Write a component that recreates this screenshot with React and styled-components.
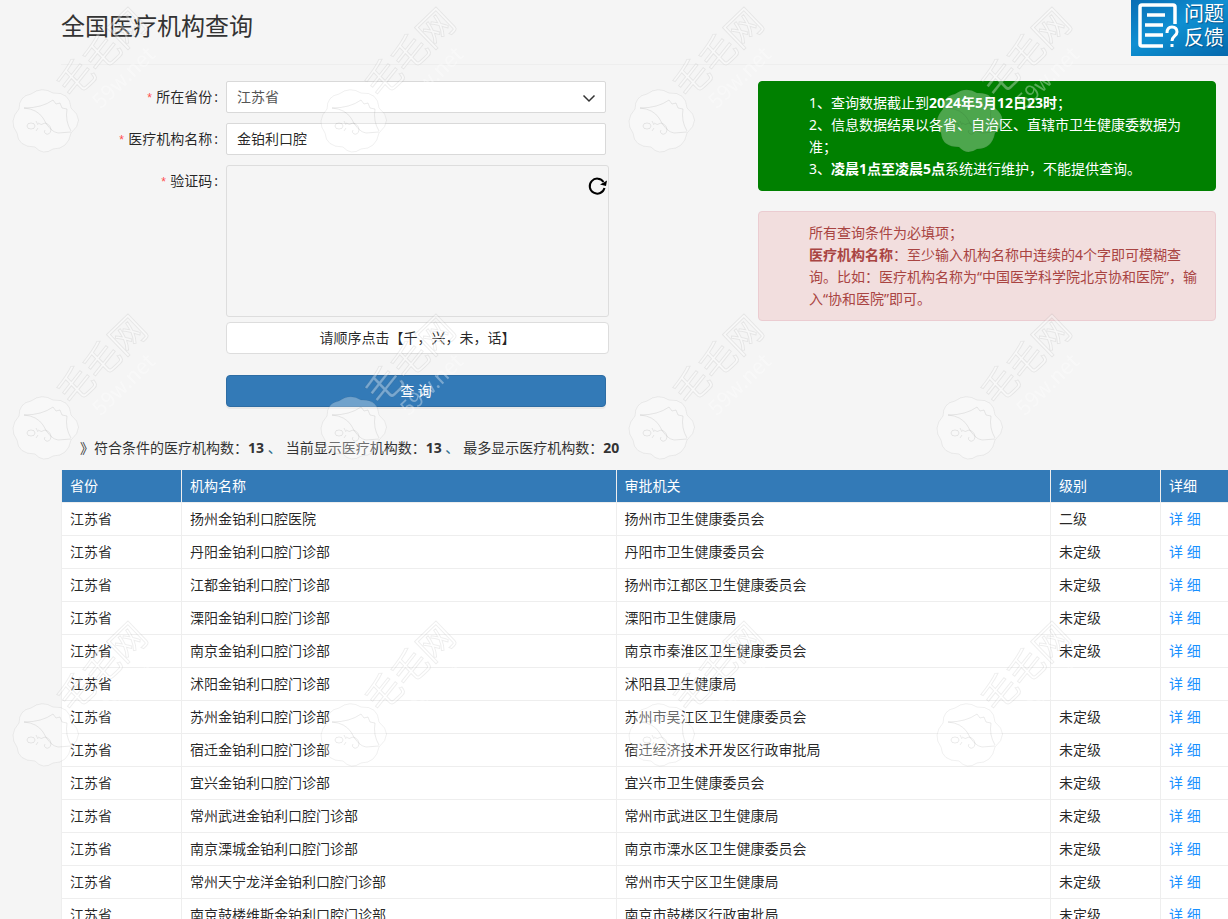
import React, { useState } from 'react';
import styled, { createGlobalStyle } from 'styled-components';

const GlobalStyle = createGlobalStyle`
  * {
    box-sizing: border-box;
  }
  html {
    scrollbar-width: none;
  }
  body {
    margin: 0;
    background: #f5f5f5;
    color: rgba(0, 0, 0, 0.85);
    font-family: "Noto Sans", "Noto Sans CJK SC", sans-serif;
    font-size: 14px;
    line-height: 22px;
  }
  input, select, button {
    font: inherit;
    color: inherit;
  }
`;

const Page = styled.main`
  padding-left: 61px;
`;

const PageHeader = styled.header`
  height: 65px;
  padding-top: 8px;
  border-bottom: 1px solid #eee;
`;

const Title = styled.h1`
  margin: 0;
  color: #333;
  font-size: 24px;
  font-weight: 400;
  line-height: 36px;
`;

const Columns = styled.div`
  display: grid;
  grid-template-columns: 697fr 458fr;
  align-items: start;
  padding: 16px 12px 0 0;
`;

const Form = styled.form`
  display: flex;
  flex-direction: column;
  gap: 10px;
`;

const FormRow = styled.div`
  display: grid;
  grid-template-columns: 165px 380px;
`;

const Label = styled.label`
  padding-right: 8px;
  line-height: 32px;
  text-align: right;

  &::before {
    content: '*';
    margin-right: 3px;
    color: #ff4d4f;
    font-family: "Liberation Mono", monospace;
    font-size: 12px;
    line-height: 1;
  }
  &::after {
    content: ':';
    margin-left: 2px;
  }
`;

const SelectBox = styled.div`
  position: relative;

  svg {
    position: absolute;
    top: 12px;
    right: 10px;
    pointer-events: none;
  }
`;

const Select = styled.select`
  width: 100%;
  height: 32px;
  padding: 0 10px;
  border: 1px solid #d9d9d9;
  border-radius: 2px;
  background: #fff;
  color: #555;
  appearance: none;
`;

const TextInput = styled.input`
  width: 100%;
  height: 32px;
  padding: 0 10px 2px;
  border: 1px solid #d9d9d9;
  border-radius: 2px;
  background: #fff;
`;

const Captcha = styled.div`
  display: flex;
  flex-direction: column;
  gap: 5px;
  width: 383px;
`;

const CaptchaImage = styled.div`
  display: flex;
  justify-content: flex-end;
  align-items: flex-start;
  height: 152px;
  padding: 11px 0;
  border: 1px solid #ddd;
  border-radius: 3px;
`;

const RefreshButton = styled.button`
  display: flex;
  padding: 0;
  border: 0;
  background: none;
  color: #000;
  cursor: pointer;
`;

const CaptchaHint = styled.div`
  height: 32px;
  border: 1px solid #ddd;
  border-radius: 4px;
  background: #fff;
  line-height: 30px;
  text-align: center;
`;

const SubmitButton = styled.button`
  grid-column: 2;
  height: 32px;
  margin-top: 11px;
  border: 1px solid #2e6da4;
  border-radius: 4px;
  background: #337ab7;
  box-shadow: 0 2px 0 rgba(0, 0, 0, 0.05);
  color: #fff;
  cursor: pointer;
`;

const Notices = styled.aside`
  display: flex;
  flex-direction: column;
  gap: 20px;
`;

const Notice = styled.div`
  padding: 10px 15px 10px 50px;
  border: 1px solid ${({ $danger }) => ($danger ? '#ebccd1' : 'green')};
  border-radius: 4px;
  background: ${({ $danger }) => ($danger ? '#f2dede' : 'green')};
  color: ${({ $danger }) => ($danger ? '#a94442' : '#fff')};

  p {
    margin: 0;
  }
`;

const Summary = styled.p`
  margin: 0;
  padding: 30px 0 11px 19px;
  color: #333;

  span {
    margin-right: 4px;
    color: #31708f;
  }
`;

const Table = styled.table`
  width: 100%;
  border-left: 1px solid #eee;
  border-collapse: separate;
  border-spacing: 0;
  table-layout: fixed;
`;

const Col = styled.col`
  width: ${({ $width }) => $width};
`;

const HeadCell = styled.th`
  height: 33px;
  padding: 0 8px;
  border-right: 1px solid #eee;
  border-bottom: 1px solid #eee;
  background: #337ab7;
  background-clip: padding-box;
  color: #fff;
  font-weight: 400;
  text-align: left;

  &:last-child {
    border-right: 0;
  }
`;

const Cell = styled.td`
  height: 33px;
  padding: 0 8px;
  border-right: 1px solid #eee;
  border-bottom: 1px solid #eee;
  background: #fff;

  &:last-child {
    border-right: 0;
  }
`;

const DetailLink = styled.a`
  color: #1890ff;
  text-decoration: none;
`;

const Feedback = styled.a`
  position: fixed;
  top: 0;
  right: 0;
  display: flex;
  gap: 5px;
  width: 97px;
  height: 56px;
  padding: 2px 4px 2px 6px;
  background: linear-gradient(155deg, #0a6db4 0%, #0f8fd2 45%, #0b86c8 60%, #0669ad 100%);
  color: #fff;
  font-size: 20px;
  line-height: 24px;
  text-decoration: none;
  text-shadow: 1px 1px 1px rgba(0, 50, 100, 0.6);

  svg {
    flex: none;
  }
`;

const WatermarkLayer = styled.div`
  position: fixed;
  inset: 0;
  display: grid;
  grid-template-columns: repeat(4, 308px);
  grid-auto-rows: 307px;
  overflow: hidden;
  pointer-events: none;
`;

const institutions = [
  ['扬州金铂利口腔医院', '扬州市卫生健康委员会', '二级'],
  ['丹阳金铂利口腔门诊部', '丹阳市卫生健康委员会', '未定级'],
  ['江都金铂利口腔门诊部', '扬州市江都区卫生健康委员会', '未定级'],
  ['溧阳金铂利口腔门诊部', '溧阳市卫生健康局', '未定级'],
  ['南京金铂利口腔门诊部', '南京市秦淮区卫生健康委员会', '未定级'],
  ['沭阳金铂利口腔门诊部', '沭阳县卫生健康局', ''],
  ['苏州金铂利口腔门诊部', '苏州市吴江区卫生健康委员会', '未定级'],
  ['宿迁金铂利口腔门诊部', '宿迁经济技术开发区行政审批局', '未定级'],
  ['宜兴金铂利口腔门诊部', '宜兴市卫生健康委员会', '未定级'],
  ['常州武进金铂利口腔门诊部', '常州市武进区卫生健康局', '未定级'],
  ['南京溧城金铂利口腔门诊部', '南京市溧水区卫生健康委员会', '未定级'],
  ['常州天宁龙洋金铂利口腔门诊部', '常州市天宁区卫生健康局', '未定级'],
  ['南京鼓楼维斯金铂利口腔门诊部', '南京市鼓楼区行政审批局', '未定级'],
];

function ChevronIcon() {
  return (
    <svg width="14" height="10" viewBox="0 0 14 10" fill="none" stroke="#333" strokeWidth="1.5">
      <path d="M1.5 2.5 7 8l5.5-5.5" />
    </svg>
  );
}

function RefreshIcon() {
  return (
    <svg width="20" height="20" viewBox="0 0 20 20" fill="none" stroke="currentColor" strokeWidth="2">
      <path d="M15.5 5A7.5 7.5 0 1 0 16.5 11" />
      <path d="M12 7.5 18 9 19 3.500 16.5 5z" fill="currentColor" stroke="none" />
    </svg>
  );
}

function FeedbackIcon() {
  return (
    <svg width="42" height="50" viewBox="0 0 42 50" fill="none" stroke="#fff" strokeWidth="3.5">
      <path d="M38 22V5q0-2-2-2H5Q3 3 3 5v37q0 2 2 2h21" />
      <path d="M10 13h18M8 23h18M8 33h18" />
      <path d="M30 31q0-6 5-6t5 5c0 4-5 4-5 9" strokeWidth="3" />
      <path d="M33.5 42h3v3h-3z" fill="#fff" stroke="none" />
    </svg>
  );
}

function WatermarkTile() {
  return (
    <svg width="308" height="307" viewBox="0 0 308 307" fill="none" aria-hidden="true">
      <path
        d="M19 109Q8 121 17 133Q18 147 35 147Q43 156 53 149Q68 149 71 133Q86 120 71 108Q70 92 53 93Q42 86 31 94Q19 96 19 109Z"
        fill="#fff"
        fillOpacity="0.3"
        stroke="#000"
        strokeOpacity="0.06"
      />
      <g stroke="#000" strokeOpacity="0.08">
        <path d="M24 108Q42 108 53 100L56 104L60 103L62 108L67 109Q65 121 71 131" />
        <path d="M24 108Q37 109 43 118Q50 132 58 133L71 132" />
        <path d="M38 123Q41 126 45 123Q51 125 51 130Q50 135 46 134Q43 132 45 130" />
        <ellipse cx="31" cy="126" rx="4" ry="3" />
        <path d="M36 121l2 4M36 131l2-3" />
      </g>
      <g
        transform="translate(72 100) rotate(-44)"
        fill="#fff"
        fillOpacity="0.35"
        stroke="#000"
        strokeOpacity="0.07"
        fontFamily="Noto Sans CJK SC, sans-serif"
      >
        <text x="0" y="0" fontSize="36">毛毛网</text>
        <text x="14" y="27" fontSize="21" stroke="none">59w.net</text>
      </g>
    </svg>
  );
}

function Watermark() {
  return (
    <WatermarkLayer>
      {Array.from({ length: 12 }, (_, i) => (
        <WatermarkTile key={i} />
      ))}
    </WatermarkLayer>
  );
}

function SearchForm() {
  const [name, setName] = useState('金铂利口腔');

  return (
    <Form onSubmit={(e) => e.preventDefault()}>
      <FormRow>
        <Label htmlFor="province">所在省份</Label>
        <SelectBox>
          <Select id="province" defaultValue="江苏省">
            <option>江苏省</option>
          </Select>
          <ChevronIcon />
        </SelectBox>
      </FormRow>
      <FormRow>
        <Label htmlFor="name">医疗机构名称</Label>
        <TextInput id="name" value={name} onChange={(e) => setName(e.target.value)} />
      </FormRow>
      <FormRow>
        <Label as="div">验证码</Label>
        <Captcha>
          <CaptchaImage>
            <RefreshButton type="button" aria-label="刷新验证码">
              <RefreshIcon />
            </RefreshButton>
          </CaptchaImage>
          <CaptchaHint>请顺序点击【千，兴，未，话】</CaptchaHint>
        </Captcha>
      </FormRow>
      <FormRow>
        <SubmitButton type="submit">查 询</SubmitButton>
      </FormRow>
    </Form>
  );
}

function App() {
  return (
    <>
      <GlobalStyle />
      <Page lang="zh-CN">
        <PageHeader>
          <Title>全国医疗机构查询</Title>
        </PageHeader>
        <Columns>
          <SearchForm />
          <Notices>
            <Notice>
              <p>1、查询数据截止到<b>2024年5月12日23时</b>；</p>
              <p>2、信息数据结果以各省、自治区、直辖市卫生健康委数据为准；</p>
              <p>3、<b>凌晨1点至凌晨5点</b>系统进行维护，不能提供查询。</p>
            </Notice>
            <Notice $danger>
              <p>所有查询条件为必填项；</p>
              <p>
                <b>医疗机构名称</b>：至少输入机构名称中连续的4个字即可模糊查询。比如：医疗机构名称为“中国医学科学院北京协和医院”，输入“协和医院”即可。
              </p>
            </Notice>
          </Notices>
        </Columns>
        <Summary>
          》符合条件的医疗机构数：<b>13</b> <span>、</span>
          当前显示医疗机构数：<b>13</b> <span>、</span>
          最多显示医疗机构数：<b>20</b>
        </Summary>
        <Table>
          <colgroup>
            <Col $width="120px" />
            <Col />
            <Col />
            <Col $width="110px" />
            <Col $width="67px" />
          </colgroup>
          <thead>
            <tr>
              <HeadCell>省份</HeadCell>
              <HeadCell>机构名称</HeadCell>
              <HeadCell>审批机关</HeadCell>
              <HeadCell>级别</HeadCell>
              <HeadCell>详细</HeadCell>
            </tr>
          </thead>
          <tbody>
            {institutions.map(([title, authority, level]) => (
              <tr key={title}>
                <Cell>江苏省</Cell>
                <Cell>{title}</Cell>
                <Cell>{authority}</Cell>
                <Cell>{level}</Cell>
                <Cell>
                  <DetailLink href="#">详 细</DetailLink>
                </Cell>
              </tr>
            ))}
          </tbody>
        </Table>
      </Page>
      <Feedback href="#">
        <FeedbackIcon />
        问题反馈
      </Feedback>
      <Watermark />
    </>
  );
}

export default App;
